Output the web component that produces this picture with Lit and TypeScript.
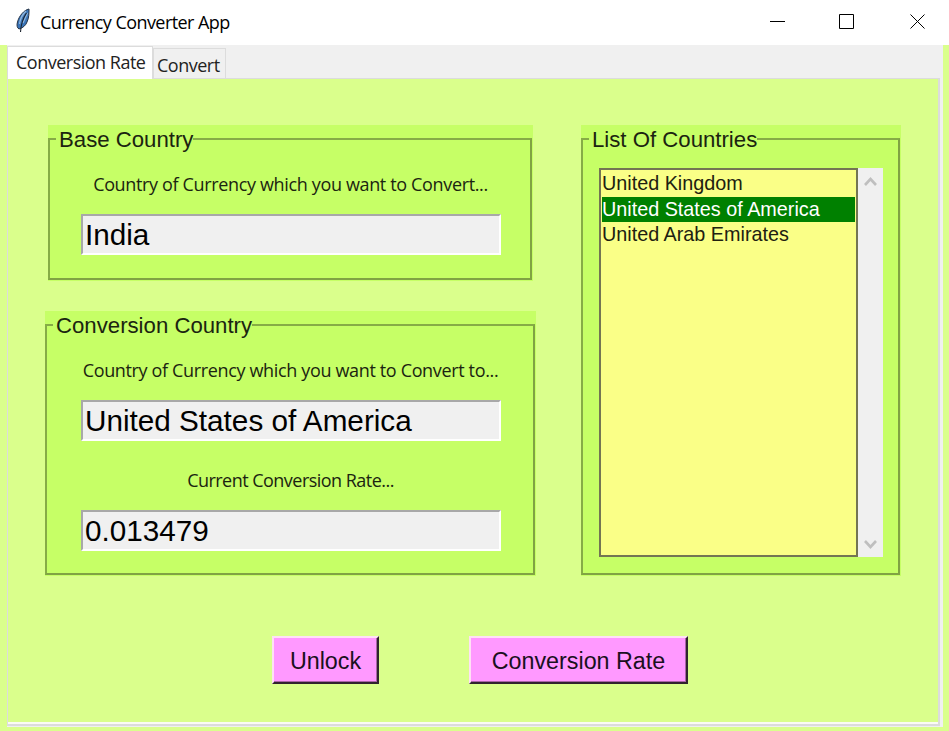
import { LitElement, html, css } from "lit";
import { customElement, property } from "lit/decorators.js";

@customElement("group-frame")
class GroupFrame extends LitElement {
  @property() label = "";
  static styles = css`
    :host {
      display: block;
      box-sizing: border-box;
      background: #c6ff66;
      padding: 13px 1px 1px 0;
    }
    .box {
      box-sizing: border-box;
      height: 100%;
      border: 2px solid #86ac46;
      border-right-color: #80a343;
      border-bottom-color: #80a343;
    }
    .label {
      display: block;
      width: max-content;
      height: 26px;
      margin: -13px 0 0 6px;
      padding: 0 0 0 3px;
      background: #c6ff66;
      font: 22.2px/26px "Liberation Sans", Arial, sans-serif;
      color: #1b2410;
      white-space: pre;
    }
  `;
  render() {
    return html`<div class="box"><span class="label">${this.label}</span><slot></slot></div>`;
  }
}

@customElement("app-root")
class AppRoot extends LitElement {
  static styles = css`
    :host {
      display: flex;
      flex-direction: column;
      width: 949px;
      height: 731px;
      overflow: hidden;
      background: #daff8c;
      font-family: "Liberation Sans", Arial, sans-serif;
      color: #111;
      white-space: nowrap;
    }
    .titlebar {
      display: flex;
      height: 45px;
      flex: none;
      background: #fff;
      color: #000;
    }
    .feather { width: 18px; height: 26px; margin: 8px 7px 0 15px; }
    .title {
      flex: 1;
      font: 18px/45px "Open Sans", "Noto Sans", sans-serif;
      letter-spacing: -0.57px;
    }
    .controls { width: 199px; height: 45px; }
    .notebook {
      display: flex;
      flex-direction: column;
      width: 936px;
      height: 682px;
      margin-left: 7px;
      box-sizing: border-box;
      background: #f0f0f0;
      padding: 1px 3px 1px 0;
    }
    .tabs {
      display: flex;
      align-items: flex-end;
      height: 32px;
      flex: none;
      font: 18px/32px "Open Sans", "Noto Sans", sans-serif;
      letter-spacing: -0.5px;
      color: #222;
    }
    .tab {
      box-sizing: border-box;
      border: 1px solid #dcdcdc;
      border-bottom: none;
      height: 30px;
      width: 73px;
      padding-left: 3px;
    }
    .tab.active {
      background: #fff;
      height: 33px;
      width: 146px;
      line-height: 31px;
      padding-left: 8px;
      margin-bottom: -1px;
      position: relative;
    }
    .pane {
      flex: 1;
      box-sizing: border-box;
      display: flex;
      flex-direction: column;
      border: 1px solid #dcdcdc;
      border-right-width: 2px;
      background: #daff8c;
      border-bottom: 2px solid #dcdcdc;
      box-shadow: inset 0 -2px #fbfbf5;
    }
    .groups { display: flex; align-items: flex-start; height: 512px; }
    .left { padding: 46px 0 0 37px; width: 491px; }
    .base { width: 485px; height: 156px; margin-left: 3px; }
    .conv { width: 491px; height: 265px; margin-top: 30px; }
    .list { width: 320px; height: 451px; margin: 46px 0 0 45px; }
    .hint {
      text-align: center;
      font: 18px/24px "Open Sans", "Noto Sans", sans-serif;
      color: #1b2410;
      height: 24px;
      margin-top: 19px;
      letter-spacing: -0.35px;
      padding-left: 1px;
    }
    .entry {
      box-sizing: border-box;
      width: 420px;
      height: 41px;
      border: 2px solid #fff;
      border-top-color: #a8a8a8;
      border-left-color: #a8a8a8;
      background: #f0f0f0;
      font-size: 29.7px;
      line-height: 38px;
      padding-left: 2px;
      color: #000;
    }
    .base .entry { margin: 18px 0 0 31px; }
    .conv .entry { margin: 18px 0 0 34px; }
    .conv .entry + .hint { margin-top: 27px; letter-spacing: -0.53px; }
    .listrow { display: flex; margin: 15px 0 0 16px; }
    .listbox {
      box-sizing: border-box;
      width: 259px;
      height: 389px;
      border: 2px solid #737553;
      background: #faff87;
      padding: 1px;
      font-size: 19.8px;
      color: #202010;
    }
    .item { height: 25.5px; line-height: 25.5px; }
    .item.sel { background: #008000; color: #fff; }
    .scroll { width: 25px; height: 389px; background: #f0f0f0; }
    .buttons { display: flex; gap: 90px; margin: 45px 0 0 264px; }
    .btn {
      box-sizing: border-box;
      height: 48px;
      text-align: center;
      background: #ff99ff;
      border: 2px solid #30232e;
      border-top-color: #ffe0f5;
      border-left-color: #ffe0f5;
      box-shadow: inset -1px -1px #a864a6;
      font-size: 23.3px;
      line-height: 46px;
      color: #1a1020;
    }
    .unlock { width: 107px; }
    .rate { width: 219px; }
  `;

  private countries = ["United Kingdom", "United States of America", "United Arab Emirates"];
  private selected = 1;

  render() {
    return html`
      <div class="titlebar">
        <svg class="feather" viewBox="0 0 18 26">
          <path d="M14 1C9 2 4 8 2.500 14C1.500 17 2 20 4 21C8 20 11 17 12 14C14 10 14 5 14 1Z" fill="#3974b8" stroke="#253346" stroke-width="1"/>
          <path d="M11 3C7 7 5 11 4.500 16M12.500 5L8 15" fill="none" stroke="#8fb5dc" stroke-width="1.300"/>
          <path d="M11.500 5C8 10 6 16 5.500 24" fill="none" stroke="#1a222c" stroke-width="1.100"/>
        </svg>
        <div class="title">Currency Converter App</div>
        <svg class="controls" viewBox="0 0 199 45" fill="none" stroke="#000" stroke-width="1">
          <path d="M20 21.500H35M89.500 14.500H103.500V28.500H89.500ZM160.500 14.500L174.500 28.500M174.500 14.500L160.500 28.500"/>
        </svg>
      </div>
      <div class="notebook">
        <div class="tabs">
          <div class="tab active">Conversion Rate</div>
          <div class="tab">Convert</div>
        </div>
        <div class="pane">
          <div class="groups">
            <div class="left">
              <group-frame class="base" label="Base Country">
                <div class="hint">Country of Currency which you want to Convert...</div>
                <div class="entry">India</div>
              </group-frame>
              <group-frame class="conv" label="Conversion Country">
                <div class="hint">Country of Currency which you want to Convert to...</div>
                <div class="entry">United States of America</div>
                <div class="hint">Current Conversion Rate...</div>
                <div class="entry">0.013479</div>
              </group-frame>
            </div>
            <group-frame class="list" label="List Of Countries">
              <div class="listrow">
                <div class="listbox">
                  ${this.countries.map((c, i) => html`<div class="item ${i === this.selected ? "sel" : ""}">${c}</div>`)}
                </div>
                <svg class="scroll" viewBox="0 0 25 389" fill="none" stroke="#bfbfbf" stroke-width="2.600">
                  <path d="M7 17L12.500 11L18 17M7 373L12.500 379L18 373"/>
                </svg>
              </div>
            </group-frame>
          </div>
          <div class="buttons">
            <div class="btn unlock">Unlock</div>
            <div class="btn rate">Conversion Rate</div>
          </div>
        </div>
      </div>
    `;
  }
}
